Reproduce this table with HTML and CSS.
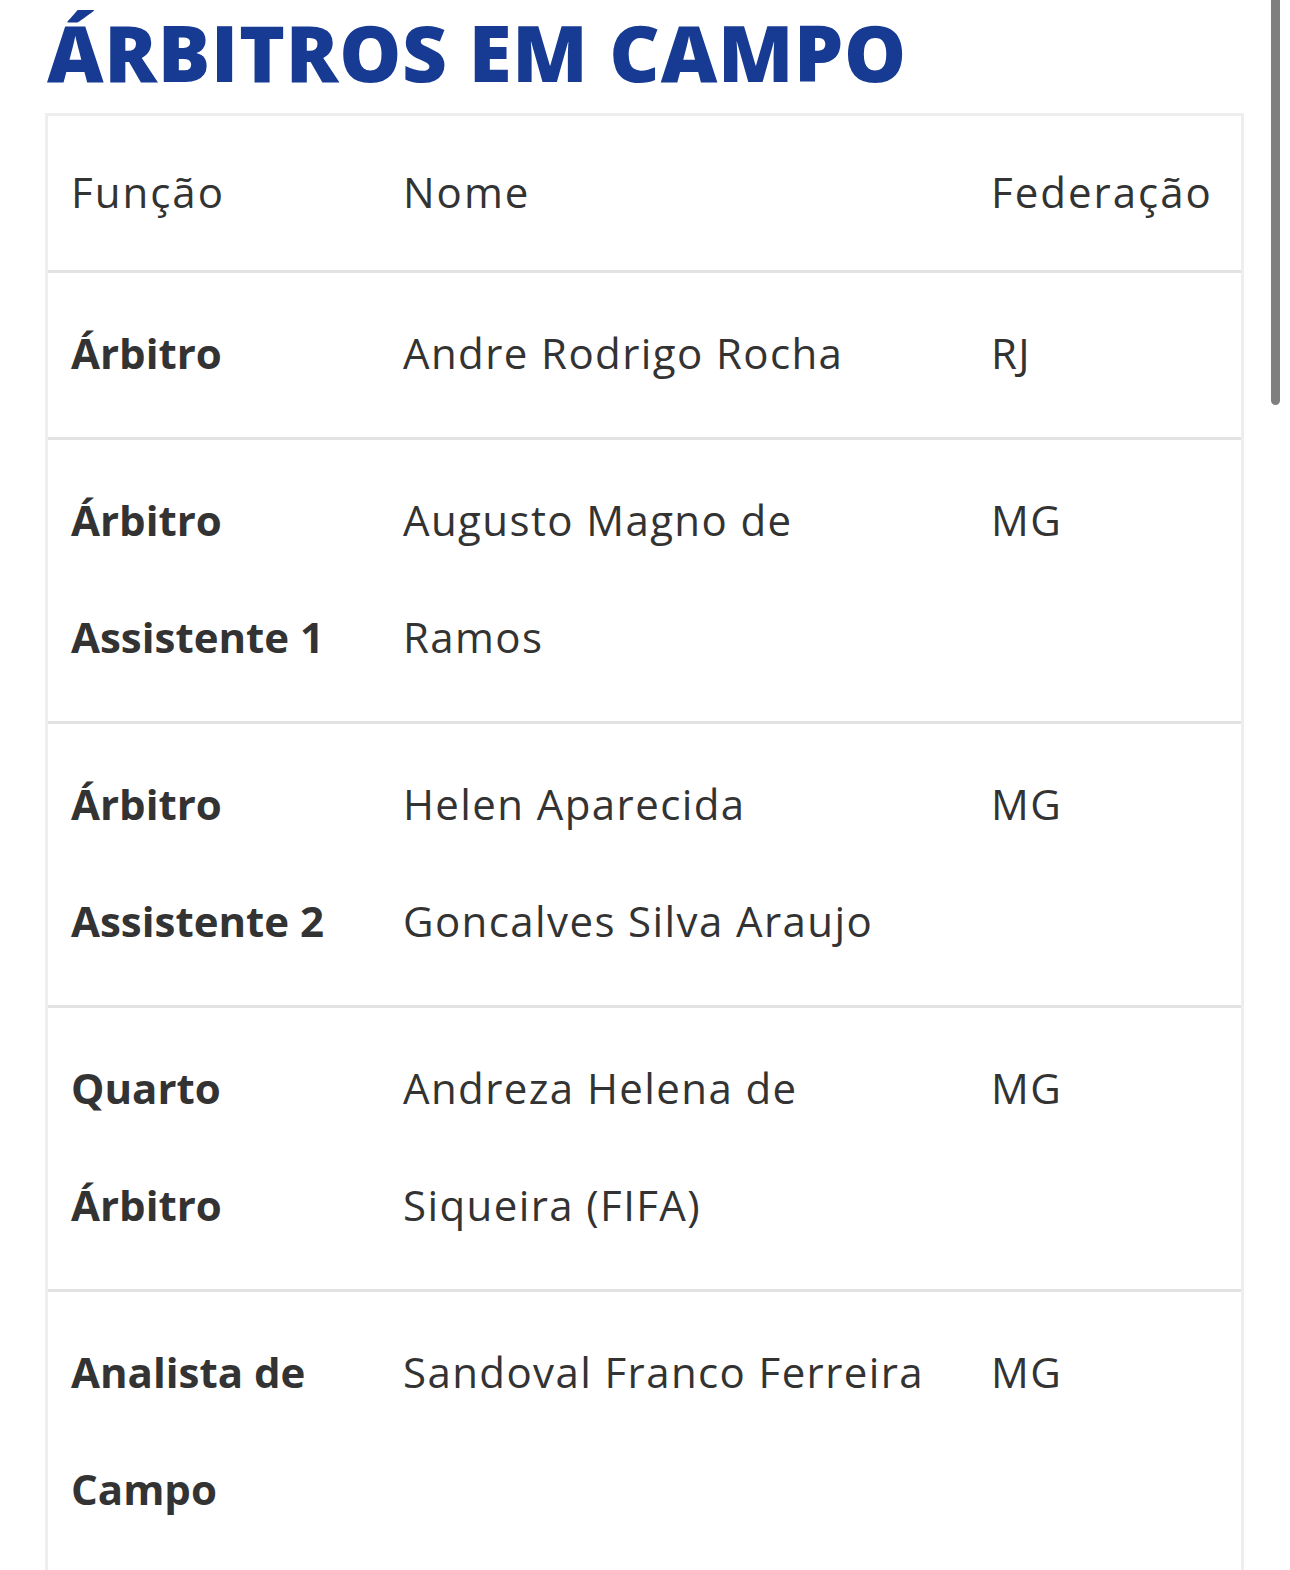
FILE: index.html
```html
<!DOCTYPE html>
<html lang="pt-BR">
<head>
<meta charset="utf-8">
<title>Árbitros em campo</title>
<link rel="stylesheet" href="styles.css">
</head>
<body>
<main class="page">
  <h2 class="title">ÁRBITROS EM CAMPO</h2>
  <table class="refs">
    <thead>
      <tr>
        <th class="c1">Função</th>
        <th class="c2">Nome</th>
        <th class="c3">Federação</th>
      </tr>
    </thead>
    <tbody>
      <tr>
        <td class="role">Árbitro</td>
        <td class="name">Andre Rodrigo Rocha</td>
        <td class="fed">RJ</td>
      </tr>
      <tr>
        <td class="role">Árbitro Assistente 1</td>
        <td class="name">Augusto Magno de Ramos</td>
        <td class="fed">MG</td>
      </tr>
      <tr>
        <td class="role">Árbitro Assistente 2</td>
        <td class="name">Helen Aparecida Goncalves Silva Araujo</td>
        <td class="fed">MG</td>
      </tr>
      <tr>
        <td class="role">Quarto Árbitro</td>
        <td class="name">Andreza Helena de Siqueira (FIFA)</td>
        <td class="fed">MG</td>
      </tr>
      <tr>
        <td class="role">Analista de Campo</td>
        <td class="name">Sandoval Franco Ferreira</td>
        <td class="fed">MG</td>
      </tr>
    </tbody>
  </table>
</main>
<div class="scrollbar"></div>
</body>
</html>
```

FILE: styles.css
```css
html, body {
  margin: 0;
  padding: 0;
  background: #ffffff;
}

body {
  font-family: "Open Sans", "Noto Sans", sans-serif;
  color: #333333;
  overflow: hidden;
}

.page {
  padding: 0 45px 0 45px;
}

.title {
  margin: 0;
  padding: 2px 0 0 2px;
  font-family: "Open Sans", "Noto Sans", sans-serif;
  font-size: 78px;
  font-weight: 800;
  line-height: 100px;
  color: #173a93;
  letter-spacing: 0.7px;
}

.refs {
  margin-top: 11px;
  width: 1199px;
  border-collapse: separate;
  border-spacing: 0;
  border: 3px solid #eeeeee;
  table-layout: fixed;
  font-size: 42px;
}

.refs th,
.refs td {
  box-sizing: border-box;
  text-align: left;
  vertical-align: top;
  padding: 21px 23px 26px 23px;
  line-height: 117px;
  border-bottom: 3px solid #e2e2e2;
}

.refs th {
  font-weight: 500;
  line-height: 104px;
  padding-top: 24px;
  padding-bottom: 26px;
  letter-spacing: 2px;
}

.refs .c1 { width: 332px; }
.refs .c2 { width: 588px; padding-right: 35px; }

.refs td.role {
  font-weight: 700;
}

.refs td.name {
  padding-right: 35px;
  letter-spacing: 1.4px;
}

.refs td.fed {
  letter-spacing: 1.4px;
}

.scrollbar {
  position: fixed;
  top: -10px;
  right: 10px;
  width: 9px;
  height: 415px;
  border-radius: 5px;
  background: #7f7f7f;
}
```
